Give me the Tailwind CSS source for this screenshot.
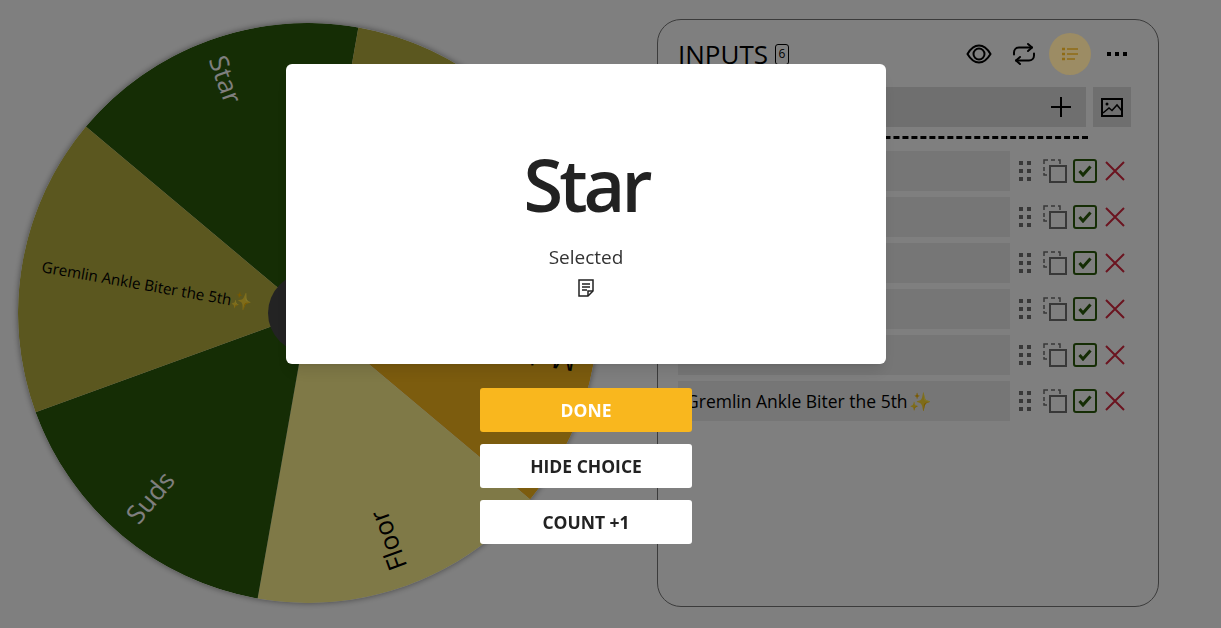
<!DOCTYPE html>
<html lang="en">

<head>
    <meta charset="UTF-8">
    <meta name="viewport" content="width=device-width, initial-scale=1.0">
    <title>Wheel</title>
    <script src="https://cdn.jsdelivr.net/npm/@tailwindcss/browser@4"></script>
</head>

<body class="bg-white font-['Open_Sans','Noto_Sans',sans-serif] overflow-hidden">

    <div class="flex h-[628px] w-[1221px]">

        <!-- wheel -->
        <div class="w-[657px] shrink-0 pl-[18px] pt-[23px]">
            <svg width="580" height="580" viewBox="-290 -290 580 580" class="rounded-full shadow-[0_0_6px_rgba(0,0,0,0.45)]" font-family="Open Sans, sans-serif">
                <path d="M0 0L-222.2 -186.4A290 290 0 0 1 50.4 -285.6Z" fill="#2a5a0a" />
                <path d="M0 0L50.4 -285.6A290 290 0 0 1 272.5 -99.2Z" fill="#b6ae3e" />
                <path d="M0 0L272.5 -99.2A290 290 0 0 1 222.2 186.4Z" fill="#f8b81c" />
                <path d="M0 0L222.2 186.4A290 290 0 0 1 -50.4 285.6Z" fill="#fef28e" />
                <path d="M0 0L-50.4 285.6A290 290 0 0 1 -272.5 99.2Z" fill="#2a5a0a" />
                <path d="M0 0L-272.5 99.2A290 290 0 0 1 -222.2 -186.4Z" fill="#b6ae3e" />

                <text transform="rotate(-20) translate(0 -272) rotate(90)" y="7" font-size="26" fill="#fff">Star</text>
                <text transform="rotate(40) translate(0 -272) rotate(90)" y="7" font-size="26" fill="#000">Soap</text>
                <text transform="rotate(100) translate(0 -272) rotate(90)" y="7" font-size="26" fill="#000">Mold</text>
                <text transform="rotate(160) translate(0 -272) rotate(90)" y="7" font-size="26" fill="#000">Floor</text>
                <text transform="rotate(220) translate(0 -272) rotate(90)" y="7" font-size="26" fill="#fff">Suds</text>
                <text transform="rotate(280) translate(0 -270) rotate(90)" y="6" font-size="15.2" fill="#000">Gremlin Ankle Biter the 5th<tspan fill="#e0a830" font-size="17">✨</tspan></text>

                <circle r="40" fill="#464646" />
            </svg>
        </div>

        <!-- inputs panel -->
        <div class="mt-[19px] flex h-[588px] w-[502px] shrink-0 flex-col rounded-3xl border border-[#777] px-5 pt-[13px]">
            <div class="flex h-[42px] items-center">
                <h2 class="text-[26px] font-medium text-black">INPUTS</h2>
                <span class="ml-[7px] flex h-[21px] w-[14px] items-center justify-center rounded-[3px] border border-black text-xs text-black">6</span>
                <div class="ml-auto flex items-center">
                    <svg width="26" height="20" viewBox="0 0 26 20" fill="none" stroke="#000" stroke-width="2">
                        <path d="M1.5 10C5 4 9 1.5 13 1.5S21 4 24.5 10C21 16 17 18.500 13 18.500S5 16 1.500 10Z" />
                        <circle cx="13" cy="10" r="5.500" />
                    </svg>
                    <svg class="ml-[20px]" width="24" height="24" viewBox="0 0 24 24" fill="none" stroke="#000" stroke-width="2" stroke-linecap="round" stroke-linejoin="round">
                        <path d="M16 2l4 3.500-4 3.500" />
                        <path d="M20 5.500H7a5 5 0 0 0-5 5v2" />
                        <path d="M8 22l-4-3.500 4-3.500" />
                        <path d="M4 18.500h13a5 5 0 0 0 5-5v-2" />
                    </svg>
                    <div class="relative z-20 ml-[13px] flex h-[42px] w-[42px] items-center justify-center rounded-full bg-[#9c8c64]">
                        <svg width="16" height="14" viewBox="0 0 16 14" stroke="#8f6b14" stroke-width="1.500" fill="none">
                            <path d="M5 2h11M5 7h11M5 12h8" />
                            <path d="M0 2h3M0 7h3M0 12h3" stroke-width="2.500" />
                        </svg>
                    </div>
                    <div class="ml-[16px] mr-[11px] flex gap-1">
                        <span class="h-1 w-1 bg-black"></span>
                        <span class="h-1 w-1 bg-black"></span>
                        <span class="h-1 w-1 bg-black"></span>
                    </div>
                </div>
            </div>

            <div class="mt-3 flex gap-[7px]">
                <div class="flex h-10 w-[408px] items-center justify-end bg-[#dedede] pr-[14px]">
                    <svg width="22" height="22" viewBox="0 0 22 22" stroke="#000" stroke-width="2">
                        <path d="M11 1v20M1 11h20" />
                    </svg>
                </div>
                <div class="flex h-10 w-[38px] items-center justify-center bg-[#dedede]">
                    <svg width="22" height="19" viewBox="0 0 22 19" fill="none" stroke="#000" stroke-width="2">
                        <rect x="1" y="1" width="20" height="17" />
                        <circle cx="6" cy="6" r="1.500" fill="#000" stroke="none" />
                        <path d="M2 15l6-5 3 2.500 5-5.500 5 6" stroke-width="1.500" />
                    </svg>
                </div>
            </div>

            <div class="mt-[9px] w-[410px] border-t-[3px] border-dashed border-black"></div>

            <div class="mt-[12px] flex flex-col gap-[6px]">
                <div class="flex h-10 items-center">
                    <div class="flex h-10 w-[332px] items-center bg-[#ededed] pl-[10px] text-lg text-black">Star</div>
                    <div class="ml-[9px] grid grid-cols-2 gap-1"><i class="h-1 w-1 bg-[#707070]"></i><i class="h-1 w-1 bg-[#707070]"></i><i class="h-1 w-1 bg-[#707070]"></i><i class="h-1 w-1 bg-[#707070]"></i><i class="h-1 w-1 bg-[#707070]"></i><i class="h-1 w-1 bg-[#707070]"></i></div>
                    <svg class="ml-3" width="24" height="24" viewBox="0 0 24 24" fill="none" stroke="#707070" stroke-width="2"><path d="M1 5V1h4M8 1h4M15 1h2v4M1 8v4M1 14v2h3" stroke-width="1.500" /><rect x="7" y="7" width="16" height="16" /></svg>
                    <div class="ml-[6px] flex h-6 w-6 items-center justify-center rounded-[3px] border-2 border-[#2a5a0a]"><svg width="14" height="12" viewBox="0 0 14 12" fill="none" stroke="#2a5a0a" stroke-width="3"><path d="M1.500 6l3.500 4 7.500-8.500" /></svg></div>
                    <svg class="ml-2" width="20" height="20" viewBox="0 0 20 20" stroke="#d6283f" stroke-width="2"><path d="M1 1l18 18M19 1L1 19" /></svg>
                </div>
                <div class="flex h-10 items-center">
                    <div class="flex h-10 w-[332px] items-center bg-[#ededed] pl-[10px] text-lg text-black">Soap</div>
                    <div class="ml-[9px] grid grid-cols-2 gap-1"><i class="h-1 w-1 bg-[#707070]"></i><i class="h-1 w-1 bg-[#707070]"></i><i class="h-1 w-1 bg-[#707070]"></i><i class="h-1 w-1 bg-[#707070]"></i><i class="h-1 w-1 bg-[#707070]"></i><i class="h-1 w-1 bg-[#707070]"></i></div>
                    <svg class="ml-3" width="24" height="24" viewBox="0 0 24 24" fill="none" stroke="#707070" stroke-width="2"><path d="M1 5V1h4M8 1h4M15 1h2v4M1 8v4M1 14v2h3" stroke-width="1.500" /><rect x="7" y="7" width="16" height="16" /></svg>
                    <div class="ml-[6px] flex h-6 w-6 items-center justify-center rounded-[3px] border-2 border-[#2a5a0a]"><svg width="14" height="12" viewBox="0 0 14 12" fill="none" stroke="#2a5a0a" stroke-width="3"><path d="M1.500 6l3.500 4 7.500-8.500" /></svg></div>
                    <svg class="ml-2" width="20" height="20" viewBox="0 0 20 20" stroke="#d6283f" stroke-width="2"><path d="M1 1l18 18M19 1L1 19" /></svg>
                </div>
                <div class="flex h-10 items-center">
                    <div class="flex h-10 w-[332px] items-center bg-[#ededed] pl-[10px] text-lg text-black">Mold</div>
                    <div class="ml-[9px] grid grid-cols-2 gap-1"><i class="h-1 w-1 bg-[#707070]"></i><i class="h-1 w-1 bg-[#707070]"></i><i class="h-1 w-1 bg-[#707070]"></i><i class="h-1 w-1 bg-[#707070]"></i><i class="h-1 w-1 bg-[#707070]"></i><i class="h-1 w-1 bg-[#707070]"></i></div>
                    <svg class="ml-3" width="24" height="24" viewBox="0 0 24 24" fill="none" stroke="#707070" stroke-width="2"><path d="M1 5V1h4M8 1h4M15 1h2v4M1 8v4M1 14v2h3" stroke-width="1.500" /><rect x="7" y="7" width="16" height="16" /></svg>
                    <div class="ml-[6px] flex h-6 w-6 items-center justify-center rounded-[3px] border-2 border-[#2a5a0a]"><svg width="14" height="12" viewBox="0 0 14 12" fill="none" stroke="#2a5a0a" stroke-width="3"><path d="M1.500 6l3.500 4 7.500-8.500" /></svg></div>
                    <svg class="ml-2" width="20" height="20" viewBox="0 0 20 20" stroke="#d6283f" stroke-width="2"><path d="M1 1l18 18M19 1L1 19" /></svg>
                </div>
                <div class="flex h-10 items-center">
                    <div class="flex h-10 w-[332px] items-center bg-[#ededed] pl-[10px] text-lg text-black">Floor</div>
                    <div class="ml-[9px] grid grid-cols-2 gap-1"><i class="h-1 w-1 bg-[#707070]"></i><i class="h-1 w-1 bg-[#707070]"></i><i class="h-1 w-1 bg-[#707070]"></i><i class="h-1 w-1 bg-[#707070]"></i><i class="h-1 w-1 bg-[#707070]"></i><i class="h-1 w-1 bg-[#707070]"></i></div>
                    <svg class="ml-3" width="24" height="24" viewBox="0 0 24 24" fill="none" stroke="#707070" stroke-width="2"><path d="M1 5V1h4M8 1h4M15 1h2v4M1 8v4M1 14v2h3" stroke-width="1.500" /><rect x="7" y="7" width="16" height="16" /></svg>
                    <div class="ml-[6px] flex h-6 w-6 items-center justify-center rounded-[3px] border-2 border-[#2a5a0a]"><svg width="14" height="12" viewBox="0 0 14 12" fill="none" stroke="#2a5a0a" stroke-width="3"><path d="M1.500 6l3.500 4 7.500-8.500" /></svg></div>
                    <svg class="ml-2" width="20" height="20" viewBox="0 0 20 20" stroke="#d6283f" stroke-width="2"><path d="M1 1l18 18M19 1L1 19" /></svg>
                </div>
                <div class="flex h-10 items-center">
                    <div class="flex h-10 w-[332px] items-center bg-[#ededed] pl-[10px] text-lg text-black">Suds</div>
                    <div class="ml-[9px] grid grid-cols-2 gap-1"><i class="h-1 w-1 bg-[#707070]"></i><i class="h-1 w-1 bg-[#707070]"></i><i class="h-1 w-1 bg-[#707070]"></i><i class="h-1 w-1 bg-[#707070]"></i><i class="h-1 w-1 bg-[#707070]"></i><i class="h-1 w-1 bg-[#707070]"></i></div>
                    <svg class="ml-3" width="24" height="24" viewBox="0 0 24 24" fill="none" stroke="#707070" stroke-width="2"><path d="M1 5V1h4M8 1h4M15 1h2v4M1 8v4M1 14v2h3" stroke-width="1.500" /><rect x="7" y="7" width="16" height="16" /></svg>
                    <div class="ml-[6px] flex h-6 w-6 items-center justify-center rounded-[3px] border-2 border-[#2a5a0a]"><svg width="14" height="12" viewBox="0 0 14 12" fill="none" stroke="#2a5a0a" stroke-width="3"><path d="M1.500 6l3.500 4 7.500-8.500" /></svg></div>
                    <svg class="ml-2" width="20" height="20" viewBox="0 0 20 20" stroke="#d6283f" stroke-width="2"><path d="M1 1l18 18M19 1L1 19" /></svg>
                </div>
                <div class="flex h-10 items-center">
                    <div class="flex h-10 w-[332px] items-center bg-[#ededed] pl-[8px] text-[17.5px] text-black">Gremlin Ankle Biter the 5th<span class="ml-[1px] text-lg text-[#e0a830]">✨</span></div>
                    <div class="ml-[9px] grid grid-cols-2 gap-1"><i class="h-1 w-1 bg-[#707070]"></i><i class="h-1 w-1 bg-[#707070]"></i><i class="h-1 w-1 bg-[#707070]"></i><i class="h-1 w-1 bg-[#707070]"></i><i class="h-1 w-1 bg-[#707070]"></i><i class="h-1 w-1 bg-[#707070]"></i></div>
                    <svg class="ml-3" width="24" height="24" viewBox="0 0 24 24" fill="none" stroke="#707070" stroke-width="2"><path d="M1 5V1h4M8 1h4M15 1h2v4M1 8v4M1 14v2h3" stroke-width="1.500" /><rect x="7" y="7" width="16" height="16" /></svg>
                    <div class="ml-[6px] flex h-6 w-6 items-center justify-center rounded-[3px] border-2 border-[#2a5a0a]"><svg width="14" height="12" viewBox="0 0 14 12" fill="none" stroke="#2a5a0a" stroke-width="3"><path d="M1.500 6l3.500 4 7.500-8.500" /></svg></div>
                    <svg class="ml-2" width="20" height="20" viewBox="0 0 20 20" stroke="#d6283f" stroke-width="2"><path d="M1 1l18 18M19 1L1 19" /></svg>
                </div>
            </div>
        </div>
    </div>

    <!-- result dialog -->
    <div class="fixed inset-0 z-10 flex flex-col items-center bg-black/50 pr-[49px] pt-[64px]">
        <div class="flex h-[300px] w-[600px] flex-col items-center rounded-md bg-white text-[#222] shadow-lg">
            <h1 class="mt-[74px] text-[72px] leading-[92px] font-semibold tracking-[-4px]">Star</h1>
            <p class="mt-[13px] text-[19px] leading-7 text-[#333]">Selected</p>
            <svg class="mt-[8px]" width="16" height="18" viewBox="0 0 16 18" fill="none" stroke="#222" stroke-width="1.500">
                <path d="M1 1h14v11l-5 5H1Z" />
                <path d="M4 5h8M4 8h8M4 11h5" />
                <path d="M10 17v-5h5" />
            </svg>
        </div>
        <div class="mt-6 flex w-[212px] flex-col gap-3 text-[17.5px] font-bold">
            <button class="h-11 rounded-[3px] bg-[#f9b71e] text-white">DONE</button>
            <button class="h-11 rounded-[3px] bg-white text-[#222]">HIDE CHOICE</button>
            <button class="h-11 rounded-[3px] bg-white text-[#222]">COUNT +1</button>
        </div>
    </div>

</body>

</html>
